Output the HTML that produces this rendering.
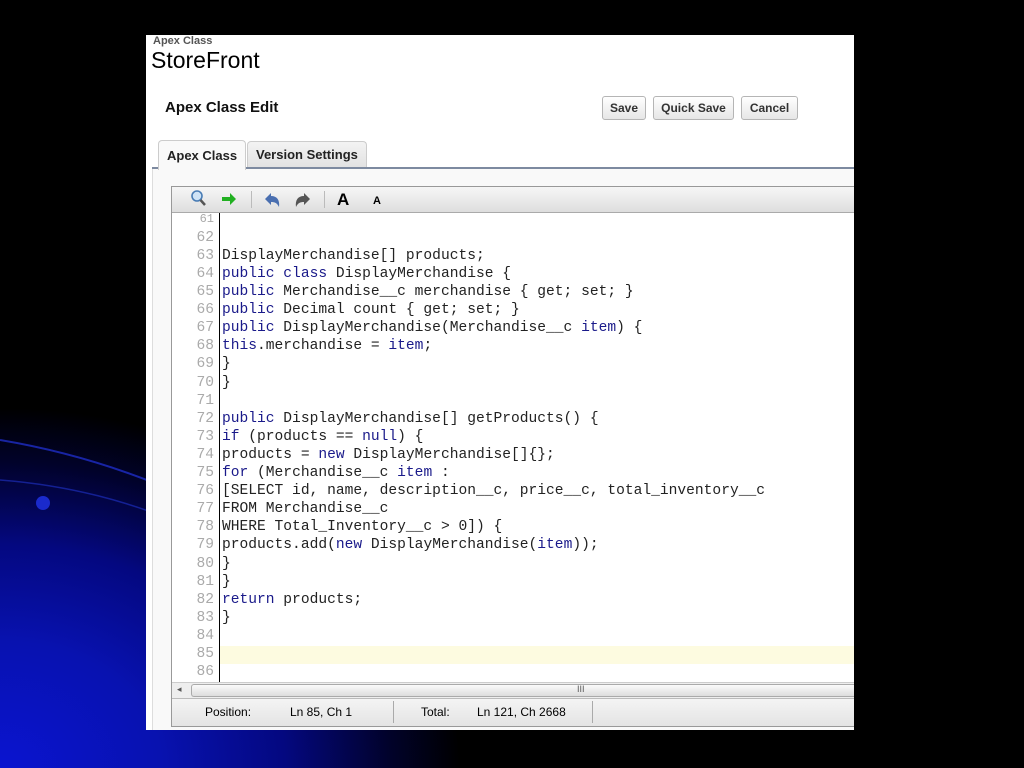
<!DOCTYPE html>
<html><head><style>
*{margin:0;padding:0;box-sizing:border-box}
body{width:1024px;height:768px;overflow:hidden;position:relative;background:#000;font-family:"Liberation Sans",sans-serif}
.bg{position:absolute;inset:0;background:radial-gradient(ellipse 460px 360px at 0px 768px,#0a14d0 0%,#0812b0 35%,#040880 62%,#01022a 85%,#000 100%)}
.panel{position:absolute;left:146px;top:35px;width:708px;height:695px;background:#fff}
.abs{position:absolute}
.btn{position:absolute;top:96px;height:24px;border:1px solid #b5b5b5;border-radius:3px;background:linear-gradient(#fff,#e6e6e6);font:bold 12px "Liberation Sans",sans-serif;color:#333;text-align:center;line-height:22px}
.code{position:absolute;left:172px;top:213px;width:682px;height:469px;overflow:hidden;background:#fff;font-family:"Liberation Mono",monospace;font-size:14.6px}
.ln{position:absolute;left:0;width:42px;text-align:right;color:#aaa}
.tx{position:absolute;left:50px;color:#222;white-space:pre}
.k{color:#1a1a8a}
</style></head><body>
<div class="bg"></div>
<svg class="abs" style="left:0;top:380px" width="460" height="388">
<path d="M0 60 C120 80 250 130 400 250" stroke="#2233dd" stroke-width="2" fill="none" opacity=".7"/>
<path d="M0 100 C130 110 260 160 420 300" stroke="#2233cc" stroke-width="1.5" fill="none" opacity=".6"/>
<circle cx="43" cy="123" r="7" fill="#1a2acc"/>
</svg>
<div class="panel"></div>
<div class="abs" style="left:153px;top:35px;font-size:11px;color:#555;font-weight:bold">Apex Class</div>
<div class="abs" style="left:151px;top:47px;font-size:23px;color:#000">StoreFront</div>
<div class="abs" style="left:165px;top:99px;font-size:15px;font-weight:bold;color:#111">Apex Class Edit</div>
<div class="btn" style="left:602px;width:44px">Save</div>
<div class="btn" style="left:653px;width:81px">Quick Save</div>
<div class="btn" style="left:741px;width:57px">Cancel</div>
<div class="abs" style="left:152px;top:167px;width:702px;height:2px;background:#7d8aa0"></div>
<div class="abs" style="left:152px;top:169px;width:702px;height:561px;background:#f9f9f9;border-left:1px solid #ddd"></div>
<div class="abs" style="left:158px;top:140px;width:88px;height:30px;background:#f9f9f9;border:1px solid #ccc;border-bottom:none;border-radius:4px 4px 0 0;font-size:13px;font-weight:bold;color:#222;padding:7px 0 0 8px">Apex Class</div>
<div class="abs" style="left:247px;top:141px;width:120px;height:26px;background:linear-gradient(#f3f3f3,#e2e2e2);border:1px solid #ccc;border-bottom:none;border-radius:4px 4px 0 0;font-size:13px;font-weight:bold;color:#222;padding:5px 0 0 8px">Version Settings</div>
<div class="abs" style="left:171px;top:186px;width:683px;height:541px;border:1px solid #999;background:#fff"></div>
<div class="abs" style="left:172px;top:187px;width:682px;height:26px;background:linear-gradient(#f6f6f6,#dedede);border-bottom:1px solid #aaa"></div>
<svg class="abs" style="left:188px;top:189px" width="210" height="20">
<circle cx="9" cy="7" r="5" fill="#cfe3f6" stroke="#4a7db5" stroke-width="1.6"/><path d="M12.5 11 L17 16" stroke="#555" stroke-width="2.5"/>
<path d="M34 8h8v-4l6 6-6 6v-4h-8z" fill="#21b021"/>
<rect x="63" y="2" width="1" height="17" fill="#bbb"/>
<path d="M77 10 l6-6v3c6 0 9 4 8 11c-2-4-4-5-8-5v3z" fill="#4a6fb0"/>
<path d="M122 10 l-6-6v3c-6 0-9 4-8 11c2-4 4-5 8-5v3z" fill="#555"/>
<rect x="136" y="2" width="1" height="17" fill="#bbb"/>
<text x="149" y="16" font-family="Liberation Sans" font-weight="bold" font-size="17">A</text>
<text x="185" y="15" font-family="Liberation Sans" font-weight="bold" font-size="11">A</text>
</svg>
<div class="code">
<div class="abs" style="left:47px;top:0;width:1px;height:469px;background:#000"></div>
<div class="abs" style="left:48px;top:433px;width:640px;height:18px;background:#fdfbe0"></div>
<div class="ln" style="top:-1px;font-size:12px">61</div><div class="ln" style="top:17px">62</div><div class="ln" style="top:35px">63</div><div class="ln" style="top:53px">64</div><div class="ln" style="top:71px">65</div><div class="ln" style="top:89px">66</div><div class="ln" style="top:107px">67</div><div class="ln" style="top:125px">68</div><div class="ln" style="top:143px">69</div><div class="ln" style="top:162px">70</div><div class="ln" style="top:180px">71</div><div class="ln" style="top:198px">72</div><div class="ln" style="top:216px">73</div><div class="ln" style="top:234px">74</div><div class="ln" style="top:252px">75</div><div class="ln" style="top:270px">76</div><div class="ln" style="top:288px">77</div><div class="ln" style="top:306px">78</div><div class="ln" style="top:324px">79</div><div class="ln" style="top:343px">80</div><div class="ln" style="top:361px">81</div><div class="ln" style="top:379px">82</div><div class="ln" style="top:397px">83</div><div class="ln" style="top:415px">84</div><div class="ln" style="top:433px">85</div><div class="ln" style="top:451px">86</div>
<div class="tx" style="top:35px">DisplayMerchandise[] products;</div>
<div class="tx" style="top:53px"><span class="k">public class</span> DisplayMerchandise {</div>
<div class="tx" style="top:71px"><span class="k">public</span> Merchandise__c merchandise { get; set; }</div>
<div class="tx" style="top:89px"><span class="k">public</span> Decimal count { get; set; }</div>
<div class="tx" style="top:107px"><span class="k">public</span> DisplayMerchandise(Merchandise__c <span class="k">item</span>) {</div>
<div class="tx" style="top:125px"><span class="k">this</span>.merchandise = <span class="k">item</span>;</div>
<div class="tx" style="top:143px">}</div>
<div class="tx" style="top:162px">}</div>
<div class="tx" style="top:198px"><span class="k">public</span> DisplayMerchandise[] getProducts() {</div>
<div class="tx" style="top:216px"><span class="k">if</span> (products == <span class="k">null</span>) {</div>
<div class="tx" style="top:234px">products = <span class="k">new</span> DisplayMerchandise[]{};</div>
<div class="tx" style="top:252px"><span class="k">for</span> (Merchandise__c <span class="k">item</span> :</div>
<div class="tx" style="top:270px">[SELECT id, name, description__c, price__c, total_inventory__c</div>
<div class="tx" style="top:288px">FROM Merchandise__c</div>
<div class="tx" style="top:306px">WHERE Total_Inventory__c &gt; 0]) {</div>
<div class="tx" style="top:324px">products.add(<span class="k">new</span> DisplayMerchandise(<span class="k">item</span>));</div>
<div class="tx" style="top:343px">}</div>
<div class="tx" style="top:361px">}</div>
<div class="tx" style="top:379px"><span class="k">return</span> products;</div>
<div class="tx" style="top:397px">}</div>
</div>
<div class="abs" style="left:172px;top:682px;width:682px;height:16px;background:#eee;border-top:1px solid #ccc"></div>
<div class="abs" style="left:177px;top:684px;font-size:9px;color:#555">◂</div>
<div class="abs" style="left:191px;top:684px;width:663px;height:13px;border:1px solid #aaa;border-right:none;border-radius:3px 0 0 3px;background:linear-gradient(#fafafa,#ddd)"></div>
<div class="abs" style="left:577px;top:684px;font-size:9px;color:#555">III</div>
<div class="abs" style="left:172px;top:698px;width:682px;height:28px;background:linear-gradient(#f4f4f4,#e4e4e4);border-top:1px solid #bbb;font-size:12px;color:#222"></div>
<div class="abs" style="left:205px;top:705px;font-size:12px">Position:</div>
<div class="abs" style="left:290px;top:705px;font-size:12px">Ln 85, Ch 1</div>
<div class="abs" style="left:393px;top:701px;width:1px;height:22px;background:#aaa"></div>
<div class="abs" style="left:421px;top:705px;font-size:12px">Total:</div>
<div class="abs" style="left:477px;top:705px;font-size:12px">Ln 121, Ch 2668</div>
<div class="abs" style="left:592px;top:701px;width:1px;height:22px;background:#aaa"></div>
</body></html>
